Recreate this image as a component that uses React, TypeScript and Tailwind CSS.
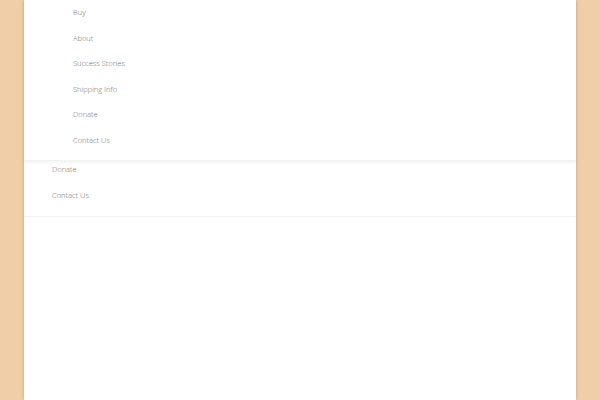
const sub = ['Buy', 'About', 'Success Stories', 'Shipping Info', 'Donate', 'Contact Us']
const top = ['Donate', 'Contact Us']

export default function App() {
  return (
    <div className="min-h-[400px] bg-[#f0cea7] font-['Open_Sans',sans-serif] font-light">
      <div className="mx-auto w-[552px] min-h-[400px] bg-white shadow-[0_0_3px_rgba(120,80,30,0.35)]">
        <nav className="relative pt-[157px] pb-[8px] border-b border-[#f2f2f2]">
          <ul className="absolute top-0 left-0 right-0 h-[161px] bg-white shadow-[0_2px_3px_rgba(0,0,0,0.05)] border-b border-[#f3f3f3] pl-[49px] z-10">
            {sub.map((s) => (
              <li key={s} className="h-[25.5px] flex items-center text-[7.5px] text-[#6f6f6f]">
                {s}
              </li>
            ))}
          </ul>
          <ul className="pl-[28px]">
            {top.map((s) => (
              <li key={s} className="h-[25.5px] flex items-center text-[7.5px] text-[#6f6f6f]">
                {s}
              </li>
            ))}
          </ul>
        </nav>
      </div>
    </div>
  )
}
